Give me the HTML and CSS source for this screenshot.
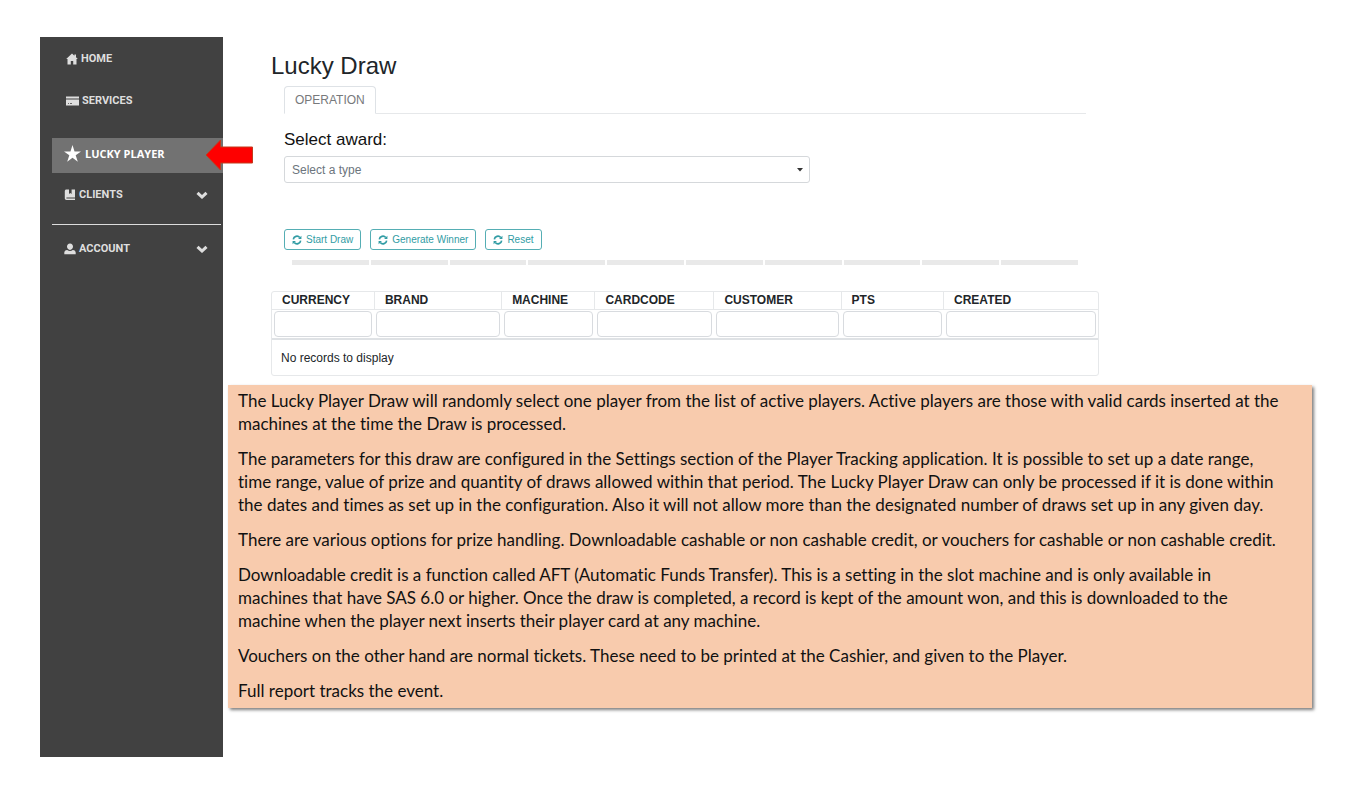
FILE: index.html
```html
<!DOCTYPE html>
<html lang="en">
<head>
    <meta charset="UTF-8">
    <meta name="viewport" content="width=device-width, initial-scale=1.0">
    <title>Lucky Draw</title>
    <link rel="stylesheet" href="styles.css">
</head>
<body>

    <div class="page">
        <!-- Sidebar -->
        <nav class="sidebar">
            <a href="#" class="nav-link">
                <svg class="icon-home" viewBox="0 0 12 12"><path d="M6 0.5 0.2 6h1.3v5.500h3.300V8h2.400v3.500h3.300V6h1.300L10 4.200V1.500H8.400v1.200z"/></svg>
                <span>HOME</span>
            </a>
            <a href="#" class="nav-link">
                <svg class="icon-card" viewBox="0 0 13 10"><path d="M0 0.500h13v2H0zM0 3.500h13V9.500H0z"/><path class="cut" d="M2 7h1v.8H2zM4 7h2v.8H4z"/></svg>
                <span>SERVICES</span>
            </a>
            <a href="#" class="nav-link active">
                <svg class="icon-star" viewBox="0 0 16 16"><path d="M8 0l1.9 6H16l-5 3.6 2 6.2-5-3.9-5 3.9 2-6.2L0 6h6.1z"/></svg>
                <span>LUCKY PLAYER</span>
                <svg class="arrow" viewBox="0 0 48 32"><path d="M1 16 15.500 1v7H47.500v16H15.500v7z"/></svg>
            </a>
            <a href="#" class="nav-link">
                <svg class="icon-book" viewBox="0 0 11 12"><path d="M2 0.500h2.500v4.500l1.300-1 1.300 1V.500H10.500v8H2.300c-.8 0-.8 1 0 1h8.200v1.500H2C1 11 .3 10.300.3 9.300V2.200C.3 1.200 1 .500 2 .500z"/></svg>
                <span>CLIENTS</span>
                <svg class="chevron" viewBox="0 0 12 8"><path d="M1.500 1.800 6 6l4.500-4.200"/></svg>
            </a>
            <hr class="divider">
            <a href="#" class="nav-link">
                <svg class="icon-user" viewBox="0 0 12 12"><path d="M6 .5c1.900 0 3 1.400 3 3.100S7.800 7 6 7 3 5.300 3 3.600 4.100.5 6 .5zM3.200 6.900C4.800 8.200 7.200 8.200 8.800 6.900c1.800.2 2.900 1.200 2.900 2.700v1.600H.3V9.600c0-1.500 1.100-2.500 2.900-2.700z"/></svg>
                <span>ACCOUNT</span>
                <svg class="chevron" viewBox="0 0 12 8"><path d="M1.500 1.800 6 6l4.500-4.200"/></svg>
            </a>
        </nav>

        <main class="main">
            <div class="content">
                <h1>Lucky Draw</h1>

                <div class="operation">
                    <div class="tabs">
                        <button type="button" class="tab">OPERATION</button>
                    </div>

                    <label class="award-label" for="award">Select award:</label>
                    <div class="select-box">
                        <select id="award">
                            <option>Select a type</option>
                        </select>
                        <svg class="caret" viewBox="0 0 6 4"><path d="M0 0h6L3 3.500z"/></svg>
                    </div>

                    <div class="actions">
                        <button type="button" class="action-btn">
                            <svg viewBox="0 0 12 12"><path class="stroke" d="M1.600 5.300A4.400 4.400 0 0 1 9.300 3M10.400 6.700A4.400 4.400 0 0 1 2.700 9"/><path d="M11.300.9v4H7.300zM.7 11.100v-4h4z"/></svg>
                            Start Draw
                        </button>
                        <button type="button" class="action-btn">
                            <svg viewBox="0 0 12 12"><path class="stroke" d="M1.600 5.300A4.400 4.400 0 0 1 9.300 3M10.400 6.700A4.400 4.400 0 0 1 2.700 9"/><path d="M11.300.9v4H7.300zM.7 11.100v-4h4z"/></svg>
                            Generate Winner
                        </button>
                        <button type="button" class="action-btn">
                            <svg viewBox="0 0 12 12"><path class="stroke" d="M1.600 5.300A4.400 4.400 0 0 1 9.300 3M10.400 6.700A4.400 4.400 0 0 1 2.700 9"/><path d="M11.300.9v4H7.300zM.7 11.100v-4h4z"/></svg>
                            Reset
                        </button>
                    </div>

                    <div class="steps">
                        <span></span><span></span><span></span><span></span><span></span>
                        <span></span><span></span><span></span><span></span><span></span>
                    </div>
                </div>

                <!-- Winners table -->
                <div class="table-box">
                    <table>
                        <colgroup>
                            <col class="col-currency">
                            <col class="col-brand">
                            <col class="col-machine">
                            <col class="col-cardcode">
                            <col class="col-customer">
                            <col class="col-pts">
                            <col>
                        </colgroup>
                        <thead>
                            <tr>
                                <th>CURRENCY</th>
                                <th>BRAND</th>
                                <th>MACHINE</th>
                                <th>CARDCODE</th>
                                <th>CUSTOMER</th>
                                <th>PTS</th>
                                <th>CREATED</th>
                            </tr>
                            <tr class="filters">
                                <td><input type="text" aria-label="Currency"></td>
                                <td><input type="text" aria-label="Brand"></td>
                                <td><input type="text" aria-label="Machine"></td>
                                <td><input type="text" aria-label="Cardcode"></td>
                                <td><input type="text" aria-label="Customer"></td>
                                <td><input type="text" aria-label="Pts"></td>
                                <td><input type="text" aria-label="Created"></td>
                            </tr>
                        </thead>
                        <tbody>
                            <tr>
                                <td class="empty" colspan="7">No records to display</td>
                            </tr>
                        </tbody>
                    </table>
                </div>
            </div>

            <!-- Description -->
            <div class="note">
                <p>The Lucky Player Draw will randomly select one player from the list of active players. Active players are those with valid cards inserted at the<br>
                machines at the time the Draw is processed.</p>
                <p>The parameters for this draw are configured in the Settings section of the Player Tracking application. It is possible to set up a date range,<br>
                time range, value of prize and quantity of draws allowed within that period. The Lucky Player Draw can only be processed if it is done within<br>
                the dates and times as set up in the configuration. Also it will not allow more than the designated number of draws set up in any given day.</p>
                <p>There are various options for prize handling. Downloadable cashable or non cashable credit, or vouchers for cashable or non cashable credit.</p>
                <p>Downloadable credit is a function called AFT (Automatic Funds Transfer). This is a setting in the slot machine and is only available in<br>
                machines that have SAS 6.0 or higher. Once the draw is completed, a record is kept of the amount won, and this is downloaded to the<br>
                machine when the player next inserts their player card at any machine.</p>
                <p>Vouchers on the other hand are normal tickets. These need to be printed at the Cashier, and given to the Player.</p>
                <p>Full report tracks the event.</p>
            </div>
        </main>
    </div>

</body>
</html>
```
FILE: styles.css
```css
* {
    box-sizing: border-box;
}
body {
    margin: 0;
    font-family: "Liberation Sans", Arial, sans-serif;
    font-size: 12px;
    color: #212529;
    background-color: white;
}
.page {
    display: flex;
    min-height: 100vh;
    padding: 37px 40px;
}

/* Sidebar */
.sidebar {
    flex: none;
    width: 183px;
    padding: 4px 0 0 12px;
    background-color: #414141;
}
.nav-link {
    display: flex;
    align-items: center;
    gap: 3px;
    height: 35px;
    margin-bottom: 7px;
    padding: 0 15px 0 12px;
    color: #dedede;
    font-family: Roboto, sans-serif;
    font-size: 11px;
    font-weight: bold;
    text-decoration: none;
}
.nav-link svg {
    flex: none;
    width: 12px;
    height: 12px;
    fill: #dedede;
}
.nav-link .icon-card {
    width: 13px;
    height: 10px;
}
.nav-link .cut {
    fill: #414141;
}
.nav-link:nth-child(1),
.nav-link:nth-child(2) {
    padding-left: 14px;
}
.nav-link.active {
    position: relative;
    gap: 4px;
    margin-top: 20px;
    margin-bottom: 4px;
    padding-bottom: 5px;
    color: white;
    background-color: #727272;
    font-family: "Open Sans", sans-serif;
}
.nav-link .icon-star {
    width: 17px;
    height: 17px;
    fill: white;
}
.nav-link .arrow {
    position: absolute;
    left: 153px;
    top: 1px;
    width: 48px;
    height: 32px;
    fill: #fe0000;
    stroke: #c23a1c;
}
.nav-link .chevron {
    height: 8px;
    margin-left: auto;
    fill: none;
    stroke: #dedede;
    stroke-width: 3;
}
.divider {
    height: 1px;
    margin: 12px 2px 6px 0;
    border: none;
    background-color: #dcdcdc;
}

/* Content */
.main {
    flex: 1;
    min-width: 0;
}
.content {
    padding: 15px 222px 0 48px;
}
h1 {
    margin: 0 0 6px;
    font-size: 24px;
    font-weight: normal;
    line-height: 28px;
}
.operation {
    padding: 0 13px;
}
.tabs {
    display: flex;
    border-bottom: 1px solid #e6e8ea;
}
.tab {
    height: 28px;
    margin-bottom: -1px;
    padding: 0 10px;
    border: 1px solid #dee2e6;
    border-bottom-color: white;
    border-radius: 4px 4px 0 0;
    background-color: white;
    color: #77797b;
    font-family: inherit;
    font-size: 12px;
}
.award-label {
    display: block;
    margin: 16px 0 6px;
    color: #111;
    font-size: 17px;
    line-height: 20px;
}
.select-box {
    position: relative;
    width: 65.6%;
}
.select-box select {
    width: 100%;
    height: 27px;
    padding: 0 7px;
    appearance: none;
    border: 1px solid #d5d8db;
    border-radius: 3px;
    background-color: white;
    color: #6c757d;
    font-family: inherit;
    font-size: 12px;
}
.caret {
    position: absolute;
    right: 7px;
    top: 12px;
    width: 6px;
    height: 4px;
    fill: #333;
}
.actions {
    display: flex;
    gap: 9px;
    margin-top: 46px;
}
.action-btn {
    display: flex;
    align-items: center;
    gap: 4px;
    height: 21px;
    padding: 0 7px;
    border: 1px solid #55aeb4;
    border-radius: 3px;
    background-color: white;
    color: #319ca4;
    font-family: inherit;
    font-size: 10px;
    cursor: pointer;
}
.action-btn svg {
    width: 10px;
    height: 10px;
    fill: #319ca4;
}
.action-btn .stroke {
    fill: none;
    stroke: #319ca4;
    stroke-width: 2;
}
.steps {
    display: flex;
    gap: 2px;
    margin: 10px 8px 26px;
}
.steps span {
    flex: 1;
    height: 5px;
    background-color: #e9e9e9;
}

/* Table */
.table-box {
    border: 1px solid #e6e8ea;
    border-radius: 3px;
}
table {
    width: 100%;
    table-layout: fixed;
    border-collapse: collapse;
}
.col-currency, .col-pts {
    width: 12.4%;
}
.col-brand, .col-customer {
    width: 15.4%;
}
.col-machine {
    width: 11.3%;
}
.col-cardcode {
    width: 14.4%;
}
th {
    height: 17px;
    padding: 0 10px;
    border-bottom: 1px solid #e6e8ea;
    font-size: 12px;
    line-height: 17px;
    text-align: left;
}
th + th {
    border-left: 1px solid #e6e8ea;
}
.filters td {
    padding: 1px 2px;
    border-bottom: 2px solid #dfe2e5;
}
.filters input {
    display: block;
    width: 100%;
    height: 26px;
    border: 1px solid #d8dbdf;
    border-radius: 4px;
}
.empty {
    height: 36px;
    padding: 0 9px;
}

/* Description */
.note {
    margin: 9px 9px 0 5px;
    padding: 4px 10px 6px;
    background-color: #f8cbad;
    box-shadow: 2px 2px 3px rgba(0, 0, 0, 0.5);
    color: #111;
    font-family: Lato, sans-serif;
    font-size: 17px;
    font-variant-ligatures: none;
    line-height: 23px;
}
.note p {
    margin: 0 0 12px;
}
.note p:last-child {
    margin-bottom: 0;
}
```
